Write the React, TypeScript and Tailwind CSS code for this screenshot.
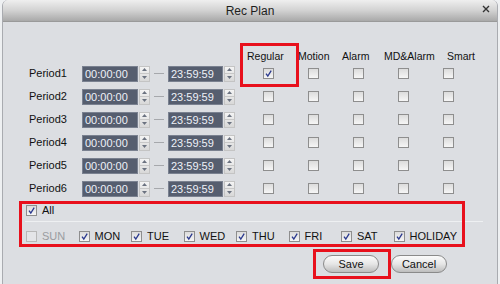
import React from "react";

const periods = ["Period1", "Period2", "Period3", "Period4", "Period5", "Period6"];
const kinds = ["Regular", "Motion", "Alarm", "MD&Alarm", "Smart"];
const headW = ["w-[51px]", "w-[44px]", "w-[42px]", "w-[63px]", "w-[40px]"];
const days = ["SUN", "MON", "TUE", "WED", "THU", "FRI", "SAT", "HOLIDAY"];

const Check = ({ checked = false, disabled = false }: { checked?: boolean; disabled?: boolean }) => (
  <span
    className={`flex items-center justify-center w-[11px] h-[11px] border ${
      disabled ? "border-[#b8b8b8] bg-[#e4e5e8]" : "border-[#8e8e8e] bg-gradient-to-b from-[#dcdcdc] to-[#f6f6f6]"
    }`}
  >
    {checked && (
      <svg width="9" height="9" viewBox="0 0 9 9">
        <path d="M2 4.6 L3.8 7 L7.2 1.6" fill="none" stroke="#2c3b8f" strokeWidth="1.3" />
      </svg>
    )}
  </span>
);

const Spinner = () => (
  <div className="ml-[1px] w-[11px] h-[16px] flex flex-col bg-gradient-to-b from-[#f4f4f4] to-[#d8d8d8] border border-[#c4c4c4]">
    <div className="flex-1 flex items-center justify-center border-b border-[#c8c8c8]">
      <svg width="5" height="3" viewBox="0 0 5 3">
        <path d="M0 3 L2.5 0 L5 3 Z" fill="#6b7280" />
      </svg>
    </div>
    <div className="flex-1 flex items-center justify-center">
      <svg width="5" height="3" viewBox="0 0 5 3">
        <path d="M0 0 L2.5 3 L5 0 Z" fill="#6b7280" />
      </svg>
    </div>
  </div>
);

const TimeBox = ({ value, w }: { value: string; w: string }) => (
  <div className={`${w} h-[16px] bg-[#565e6f] border border-[#7a8190] text-[#eef1f8] text-[11px] leading-[14px] pl-[2px]`}>
    {value}
  </div>
);

export default function App() {
  return (
    <div
      className="w-[500px] h-[284px] overflow-hidden bg-[#eef0f2]"
      style={{ fontFamily: '"Liberation Sans", Arial, sans-serif' }}
    >
      <div className="relative ml-[2px] w-[496px] h-[284px] bg-[#dcdee2] border-l border-r border-[#a9abb0] rounded-t-[6px] overflow-hidden">
        {/* title bar */}
        <div className="relative h-[22px] flex items-center justify-center bg-gradient-to-b from-[#efefef] via-[#d2d2d2] to-[#a9a9a9] border-b border-[#9a9a9a]">
          <span className="text-[12px] text-[#1e1e1e]">Rec Plan</span>
          <span className="absolute right-[6px] top-[4px]">
            <svg width="10" height="10" viewBox="0 0 10 10">
              <path d="M2 2 L8 8 M8 2 L2 8" stroke="#333" strokeWidth="1.4" />
            </svg>
          </span>
        </div>

        {/* header */}
        <div className="mt-[30px] h-[10px] flex items-center pl-[244px] text-[10.5px] text-[#111]">
          {kinds.map((k, i) => (
            <div key={k} className={`${headW[i]} whitespace-nowrap`}>
              {k}
            </div>
          ))}
        </div>

        {/* periods */}
        <div className="flex flex-col">
          {periods.map((p, r) => (
            <div key={p} className="h-[23px] flex items-center">
              <div className="w-[79px] pl-[26px] text-[11px] text-[#111]">{p}</div>
              <TimeBox value="00:00:00" w="w-[56px]" />
              <Spinner />
              <div className="mx-[4px] w-[10px] h-px bg-[#a6a8ac]" />
              <TimeBox value="23:59:59" w="w-[55px]" />
              <Spinner />
              <div className="ml-[11px] flex">
                {kinds.map((k, i) => (
                  <div key={k} className="w-[45px] flex justify-center">
                    <Check checked={r === 0 && i === 0} />
                  </div>
                ))}
              </div>
            </div>
          ))}
        </div>

        {/* days group */}
        <div className="ml-[22px] w-[458px] mt-[2px]">
          <div className="h-[17px] flex items-center gap-[5px] pl-px">
            <Check checked />
            <span className="text-[11px] text-[#111]">All</span>
          </div>
          <div className="mt-[2px] h-px bg-[#a7a9ad] border-b border-[#eef0f2]" />
          <div className="h-[28px] grid grid-cols-[repeat(7,52.5px)_1fr] items-center pl-px">
            {days.map((d, i) => (
              <div key={d} className="flex items-center gap-[5px]">
                <Check checked={i > 0} disabled={i === 0} />
                <span className={`text-[11px] ${i === 0 ? "text-[#9a9ca0]" : "text-[#111]"}`}>{d}</span>
              </div>
            ))}
          </div>
        </div>

        {/* buttons */}
        <div className="mt-[5px] flex gap-[12px] pl-[320px]">
          <button className="w-[56px] h-[18px] rounded-full border border-[#8a8a8a] bg-gradient-to-b from-[#fbfbfb] via-[#e6e6e6] to-[#bdbdbd] text-[11px] text-[#111]">
            Save
          </button>
          <button className="w-[56px] h-[18px] rounded-full border border-[#8a8a8a] bg-gradient-to-b from-[#fbfbfb] via-[#e6e6e6] to-[#bdbdbd] text-[11px] text-[#111]">
            Cancel
          </button>
        </div>

        {/* annotation boxes */}
        <div className="absolute left-[237px] top-[43px] w-[59px] h-[44px] border-[3px] border-[#e8101c]" />
        <div className="absolute left-[16px] top-[201px] w-[446px] h-[46px] border-[3px] border-[#e8101c]" />
        <div className="absolute left-[310px] top-[249px] w-[78px] h-[30px] border-[3px] border-[#e8101c]" />
      </div>
    </div>
  );
}
